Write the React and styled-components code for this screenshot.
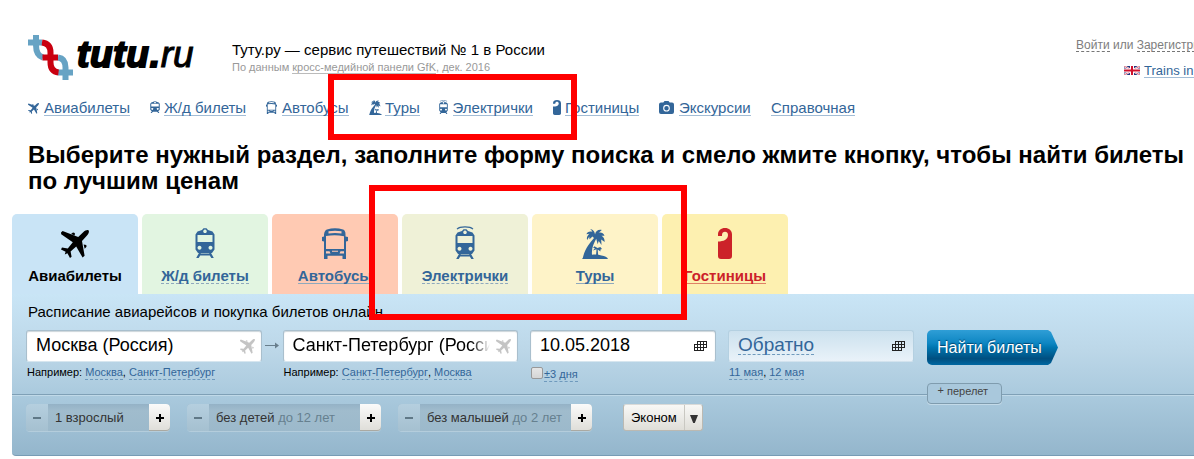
import React from "react";
import styled, { createGlobalStyle, css } from "styled-components";

const Global = createGlobalStyle`
  * { box-sizing: border-box; }
  html, body { margin: 0; padding: 0; background: #fff; overflow: hidden; }
  body { font-family: "Liberation Sans", Arial, sans-serif; color: #000; }
  svg { flex: none; }
`;

const Page = styled.div`
  position: relative;
  width: 1194px;
  height: 459px;
  overflow: hidden;
`;

const Header = styled.header`
  display: flex;
  height: 97px;
  padding: 35px 0 0 28px;
`;

const Logo = styled.div`
  display: flex;
  width: 204px;
  flex: none;
`;

const Wordmark = styled.div`
  margin-left: 3px;
  font-size: 37px;
  line-height: 40px;
  font-style: italic;
  font-weight: 700;
  white-space: nowrap;
  letter-spacing: 0.7px;
  -webkit-text-stroke: 2px #000;
`;

const WordmarkLight = styled.span`
  font-weight: 400;
  letter-spacing: 0;
  -webkit-text-stroke: 1px #000;
`;

const Tagline = styled.div`
  flex: 1;
  padding-top: 6px;
  font-size: 15px;
  line-height: 18px;
`;

const Source = styled.div`
  font-size: 11px;
  line-height: 16px;
  color: #999;
`;

const SourceLink = styled.span`
  border-bottom: 1px solid #bbb;
`;

const Account = styled.div`
  width: 118px;
  flex: none;
  padding-top: 3px;
  font-size: 12px;
  line-height: 14px;
  color: #7d7d7d;
  white-space: nowrap;
`;

const AccountLink = styled.span`
  display: inline-block;
  height: 14px;
  border-bottom: 1px dashed #777;
`;

const Language = styled.div`
  display: flex;
  align-items: center;
  gap: 4px;
  margin: 11px 0 0 48px;
  font-size: 13px;
  line-height: 15px;
  color: #369;
`;

const LanguageLabel = styled.span`
  height: 15px;
  line-height: 16px;
  border-bottom: 1px solid #a3bdd6;
`;

const Nav = styled.nav`
  display: flex;
  padding-left: 28px;
  height: 45px;
`;

const NavItem = styled.div`
  display: flex;
  flex: none;
  width: ${(p) => p.$width}px;
  font-size: 15px;
  line-height: 17px;
  padding-top: 2px;
  white-space: nowrap;
  color: #369;
`;

const NavIcon = styled.span`
  display: flex;
  flex: none;
  align-items: flex-start;
  width: ${(p) => p.$width}px;
  padding-top: ${(p) => p.$top || 0}px;
  padding-left: ${(p) => p.$left || 0}px;
`;

const NavLabel = styled.span`
  height: 17px;
  border-bottom: 1px solid #a3bdd6;
`;

const Heading = styled.h1`
  margin: 0;
  height: 72px;
  padding-left: 28px;
  font-size: 24px;
  line-height: 26px;
`;

const Tabs = styled.div`
  display: flex;
  gap: 4px;
  padding-left: 12px;
`;

const Tab = styled.div`
  display: flex;
  flex-direction: column;
  align-items: center;
  width: 126px;
  height: 80px;
  border-radius: 5px 5px 0 0;
  background: ${(p) => p.$bg};
  color: ${(p) => p.$color || "#369"};
`;

const TabIcon = styled.div`
  display: flex;
  align-items: flex-end;
  height: ${(p) => p.$bottom}px;
`;

const TabLabel = styled.div`
  margin-top: ${(p) => 53 - p.$bottom}px;
  height: 17px;
  font-size: 15px;
  line-height: 17px;
  font-weight: 700;
  border-bottom: ${(p) => (p.$line ? `1px ${p.$line} ${p.$lineColor || "#8fa9bd"}` : "none")};
`;

const Panel = styled.section`
  margin-left: 12px;
  width: 1190px;
  height: 162px;
  background: linear-gradient(#c9e5f6, #bcd7e8 35%, #a8c8dc 66%, #94b6cc);
  border-bottom: 1px solid #789cb5;
  border-radius: 0 0 0 4px;
`;

const SearchPart = styled.div`
  height: 102px;
  border-bottom: 1px solid #c0d9e8;
  box-shadow: inset 0 -1px 0 #7fa0b6;
`;

const PanelTitle = styled.div`
  height: 36px;
  padding: 9px 0 0 16px;
  font-size: 15px;
  line-height: 18px;
`;

const Fields = styled.div`
  display: flex;
  padding-left: 14px;
`;

const Field = styled.div`
  width: ${(p) => p.$width}px;
  margin-right: ${(p) => p.$gap || 0}px;
  flex: none;
`;

const Arrow = styled.div`
  width: 21px;
  padding: 12px 0 0 3px;
  flex: none;
  line-height: 0;
`;

const Input = styled.div`
  display: flex;
  align-items: center;
  justify-content: space-between;
  height: 32px;
  padding: 0 ${(p) => p.$right || 6}px 2px ${(p) => p.$left || 9}px;
  border: 1px solid #a9bfcd;
  border-bottom-color: #d7e6ef;
  border-radius: 3px;
  background: #fff;
  box-shadow: inset 0 1px 1px #ccd5da;
  font-size: 18px;
  white-space: nowrap;

  svg { margin-top: 2px; }

  ${(p) =>
    p.$pale &&
    css`
      border-color: #b4d0e1;
      border-bottom-color: #d3e3ee;
      background: linear-gradient(#cce1ee, #e9f2f9);
      box-shadow: none;
      color: #369;
      font-size: 19px;
    `}
`;

const FadingValue = styled.span`
  width: 197px;
  overflow: hidden;
  mask-image: linear-gradient(90deg, #000 178px, transparent 197px);
`;

const Dashed = styled.span`
  padding-bottom: 1px;
  border-bottom: 1px dashed #6f9abd;
  color: #369;
`;

const DashedValue = styled.span`
  height: 19px;
  line-height: 18px;
  border-bottom: 1px dashed #6f9abd;
`;

const Hint = styled.div`
  display: flex;
  align-items: flex-start;
  padding: ${(p) => (p.$check ? "5px 0 0 1px" : p.$flush ? "4px 0 0 0.5px" : "4px 0 0 1px")};
  font-size: 11px;
  line-height: 12px;
  white-space: pre;
`;

const Checkbox = styled.span`
  width: 12px;
  height: 12px;
  margin-right: 1px;
  border: 1px solid #999;
  border-radius: 2px;
  background: linear-gradient(#e6e6e6, #d5d5d5);
`;

const CheckLabel = styled(Dashed)`
  padding-top: 1px;
`;

const Actions = styled.div`
  width: 132px;
`;

const Submit = styled.div`
  width: 131px;
  height: 35px;
  padding-left: 10px;
  font-size: 16px;
  line-height: 35px;
  color: #fff;
  text-shadow: 0 -1px 1px #00436e;
  background: linear-gradient(#2f9ed6, #0d86c2 38%, #0076b0 50%, #004f80 82%, #0068a2);
  border-radius: 5px 0 0 5px;
  clip-path: polygon(0 0, 121px 0, 124px 2px, 131px 17.5px, 124px 33px, 121px 100%, 0 100%);
`;

const AddFlight = styled.div`
  display: flex;
  gap: 3px;
  width: 75px;
  height: 21px;
  margin-top: 18px;
  padding-left: 9.5px;
  border: 1px solid #7f9cae;
  border-radius: 4px;
  background: #a9c8dc;
  box-shadow: 0 1px 0 #c3dae8;
  font-size: 11px;
  line-height: 15px;
  color: #444;
`;

const Plus = styled.span`
  line-height: 13px;
`;

const Options = styled.div`
  display: flex;
  padding: 8px 0 0 14px;
`;

const Stepper = styled.div`
  display: flex;
  width: ${(p) => p.$width}px;
  height: 27px;
  margin-right: ${(p) => p.$gap}px;
  border-radius: 4px;
  background: linear-gradient(#94b2c6, #a0bccd 25%, #9cb9cb);
  box-shadow: 0 1px 0 #b4cddc;
  font-size: 13px;
  line-height: 27px;
  color: #333;
`;

const StepButton = styled.div`
  display: flex;
  align-items: center;
  justify-content: center;
  width: ${(p) => (p.$off ? 22 : 21)}px;
  flex: none;
  background: ${(p) => (p.$off ? "linear-gradient(#b5cfdf, #a5c0d0)" : "linear-gradient(#fbfbfa, #deddd8)")};
  border-radius: ${(p) => (p.$off ? "4px 0 0 4px" : "0 4px 4px 0")};
  box-shadow: ${(p) => (p.$off ? "none" : "inset 0 -1px 0 #aaa9a2")};
`;

const StepValue = styled.div`
  flex: 1;
  padding-left: 7px;
  white-space: pre;
`;

const Muted = styled.span`
  color: #66808f;
`;

const Select = styled.div`
  display: flex;
  width: 80px;
  height: 27px;
  border: 1px solid #bbb9b2;
  border-top-color: #d9dad8;
  border-radius: 3px;
  background: linear-gradient(#f8f8f6, #dfded8);
  font-size: 13px;
  line-height: 26px;
`;

const SelectLabel = styled.div`
  width: 61px;
  padding-left: 7px;
  border-right: 1px solid #c9c8c2;
`;

const SelectArrow = styled.div`
  display: flex;
  align-items: center;
  justify-content: center;
  flex: 1;
  padding-top: 2px;
`;

const Highlight = styled.div`
  position: absolute;
  left: ${(p) => p.$x}px;
  top: ${(p) => p.$y}px;
  width: ${(p) => p.$w}px;
  height: ${(p) => p.$h}px;
  border: 6px solid #f00;
`;

const Plane = ({ size = 28, fill = "currentColor" }) => (
  <svg width={size} height={size} viewBox="0 0 28 28" fill={fill}>
    <path d="M27.6.4C28.4 1.5 27.7 3.8 26 5.6L21 11l2.6 14.8-2 1.8L15.2 16.4 9.6 21.4l1 5.4L9 28l-2.6-4.8-2.6 1.4.8-2.9L0 19.4l1-1.8 5.8.8 5-6.2L.2 4.2 0 2.400 1.600 1l15.600 6 5-4.800C24 .4 26.800-.5 27.600.4Z" />
    <path d="m10 4 2-1.500 1.800.5v2.400ZM22.600 14.600l2.700.4.2 1.700-1.800 2.100Z" />
  </svg>
);

const Train = ({ width = 20, height = 30, wire }) => (
  <svg width={width} height={height} viewBox={wire ? "0 -3 20 33" : "0 0 20 30"} preserveAspectRatio="none" fill="currentColor">
    {wire && <path d="M2 .2C5-2.800 15-2.800 18 .2" fill="none" stroke="currentColor" strokeWidth="1.200" />}
    <path
      fillRule="evenodd"
      d="M7 2 8.500.3h3L13 2l4.500 1.600 2 3v15L17 25H3L.5 21.600V6.600l2-3ZM10 1.500a1.800 1.800 0 1 0 .01 0ZM2.500 7v7h15V7ZM4.500 17.800a2 2 0 1 0 .01 0ZM15.500 17.800a2 2 0 1 0 .01 0Z"
    />
    <path d="M4.500 24 1.200 30h2.500l1.500-2.600h9.600L16.300 30h2.500l-3.300-6-1.500 1.500H6Z" />
  </svg>
);

const Bus = ({ width = 26, height = 31 }) => (
  <svg width={width} height={height} viewBox="0 0 26 31" preserveAspectRatio="none" fill="currentColor">
    <path
      fillRule="evenodd"
      d="M5 1.500Q13-.9 21 1.500q2.500.8 2.500 5V8.500L26 9v4l-2 .6V31h-3.500v-3.200h-15V31H2V13.600L0 13V9l2-.5v-2q.5-4.200 3-5ZM6.500 3.300v2.200q6.500-1 13 0V3.300Q13 2 6.500 3.300ZM4 8v13h18V8.200Q13 6.300 4 8ZM4 23.200v2.300h4.500L7.500 23.200ZM22 23.200h-3.500l-1 2.300H22ZM10 22.800v1h6v-1Z"
    />
  </svg>
);

const Palm = ({ width = 26, height = 30 }) => (
  <svg width={width} height={height} viewBox="0 0 26 30" preserveAspectRatio="none" fill="currentColor">
    <path d="M13 5.500C13 2.500 10.500.2 8 0c1.500 1 2 2 2.300 2.700C7.500 1.800 5 3 4.400 5.200l3-.5C5.500 6.500 4.200 8.500 5.200 11l2-3.300.3 2.600L10.500 7.500 12 9C8 14 3 19 .8 29L0 30h26c-.6-2-3.200-3-6.500-3.600-3-.8-6-1.400-9.500-.6C9.300 19 12 14 14.200 9.800l1.500 5.400 1-3.300L19.500 16l-.3-5.500L22.700 13c0-3-1.300-5.200-3.200-6.200l3-.1C21.500 4 18.500 3 16.500 4l3.300-3C16.500.2 13.500 2 13 5.500Z" />
    <path d="m15.500 19-3-1.700-1.500 1.600 2 .2-2 2.400 3.500-1.300L14 27h2.200l-.5-6.400 2.700 2 .1-2.200 1.500-.3-1.700-2Z" />
  </svg>
);

const Hanger = ({ width = 14, height = 31 }) => (
  <svg width={width} height={height} viewBox="0 0 14 31" preserveAspectRatio="none" fill="currentColor">
    <path d="M0 8V6.500C0 2.500 3 0 7 0s7 2.500 7 6.500V28q0 3-3 3H3q-3 0-3-3V13.500c5.500 0 10-2 10-6.500 0-2.300-1.300-3.300-3-3.300S4 4.800 4 7v1Z" />
  </svg>
);

const Camera = () => (
  <svg width="15" height="13" viewBox="0 0 15 13" fill="currentColor">
    <path d="M4.300 1.500 5.500 0h4l1.200 1.500H13q2 0 2 2V11q0 2-2 2H2q-2 0-2-2V3.500q0-2 2-2Z" />
    <circle cx="7.500" cy="7.200" r="2.800" fill="none" stroke="#fff" strokeWidth="1.100" />
  </svg>
);

const Calendar = () => (
  <svg width="13" height="10" viewBox="0 0 13 10" shapeRendering="crispEdges" fill="#222">
    <path d="M3 0h10v1H3ZM0 3h13v1H0ZM0 6h13v1H0ZM0 9h10v1H0ZM0 3h1v7H0ZM3 0h1v10H3ZM6 0h1v10H6ZM9 0h1v10H9ZM12 0h1v7h-1Z" />
  </svg>
);

const LogoMark = () => (
  <svg width="46" height="46" viewBox="0 0 46 46" fill="none" strokeWidth="6">
    <path d="M8 0v10q0 10.500 7 12.500M30 22.500q7.500 1 7.500 10V45" stroke="#67a3c4" />
    <path d="M0 7.500h14M30 37.500h15" stroke="#67a3c4" />
    <path d="M14 7.500q8.500 1 8.500 10v10q0 9 8 10M14.500 22.500H30" stroke="#c90010" />
  </svg>
);

const Flag = () => (
  <svg width="16" height="9" viewBox="0 0 16 9">
    <path fill="#26347b" d="M0 0h16v9H0Z" />
    <path d="m0 0 16 9M16 0 0 9" stroke="#fff" strokeWidth="2" />
    <path d="m0 0 16 9M16 0 0 9" stroke="#d02040" strokeWidth=".7" />
    <path d="M8 0v9M0 4.500h16" stroke="#fff" strokeWidth="4" />
    <path d="M8 0v9M0 4.500h16" stroke="#d0102c" strokeWidth="2" />
  </svg>
);

const navItems = [
  { label: "Авиабилеты", width: 121, iconWidth: 16, top: 4, icon: <Plane size={11} /> },
  { label: "Ж/д билеты", width: 117, iconWidth: 15, top: 2, left: 0.5, icon: <Train width={10} height={12} /> },
  { label: "Автобусы", width: 103, iconWidth: 16, top: 2, icon: <Bus width={11} height={13} /> },
  { label: "Туры", width: 69, iconWidth: 16, top: 1, icon: <Palm width={13} height={15} /> },
  { label: "Электрички", width: 114, iconWidth: 14.5, top: 1, left: 0.7, icon: <Train width={9} height={14} wire /> },
  { label: "Гостиницы", width: 107, iconWidth: 13, top: 1, left: 0.5, icon: <Hanger width={8} height={15} /> },
  { label: "Экскурсии", width: 112, iconWidth: 20, top: 2, icon: <Camera /> },
  { label: "Справочная", width: 90, iconWidth: 0, icon: null },
];

const tabs = [
  { label: "Авиабилеты", bg: "#c9e4f6", color: "#000", bottom: 44, icon: <Plane /> },
  { label: "Ж/д билеты", bg: "#e2f5e1", line: "dashed", bottom: 44, icon: <Train /> },
  { label: "Автобусы", bg: "#ffcab3", line: "solid", bottom: 45, icon: <Bus /> },
  { label: "Электрички", bg: "#eff1d7", line: "dashed", bottom: 45, icon: <Train height={33} wire /> },
  { label: "Туры", bg: "#fef3c8", line: "solid", bottom: 45, icon: <Palm /> },
  { label: "Гостиницы", bg: "#fdf0b0", color: "#cc2229", line: "solid", lineColor: "#df8065", bottom: 45, icon: <Hanger /> },
];

const Counter = ({ width, gap, label, note }) => (
  <Stepper $width={width} $gap={gap}>
    <StepButton $off>
      <svg width="8" height="2"><path d="M0 0h8v2H0Z" fill="#5f7887" /></svg>
    </StepButton>
    <StepValue>
      {label}
      {note && <Muted> {note}</Muted>}
    </StepValue>
    <StepButton>
      <svg width="8" height="8"><path d="M3 0h2v3h3v2H5v3H3V5H0V3h3Z" /></svg>
    </StepButton>
  </Stepper>
);

export default function App() {
  return (
    <Page>
      <Global />
      <Header>
        <Logo>
          <LogoMark />
          <Wordmark>tutu.<WordmarkLight>ru</WordmarkLight></Wordmark>
        </Logo>
        <Tagline>
          Туту.ру — сервис путешествий № 1 в России
          <Source>По данным <SourceLink>кросс-медийной панели GfK</SourceLink>, дек. 2016</Source>
        </Tagline>
        <Account>
          <AccountLink>Войти</AccountLink> или <AccountLink>Зарегистрироваться</AccountLink>
          <Language><Flag /><LanguageLabel>Trains in Russia</LanguageLabel></Language>
        </Account>
      </Header>
      <Nav>
        {navItems.map((n) => (
          <NavItem key={n.label} $width={n.width}>
            <NavIcon $width={n.iconWidth} $top={n.top} $left={n.left}>{n.icon}</NavIcon>
            <NavLabel>{n.label}</NavLabel>
          </NavItem>
        ))}
      </Nav>
      <Heading>
        Выберите нужный раздел, заполните форму поиска и смело жмите кнопку, чтобы найти билеты по лучшим ценам
      </Heading>
      <Tabs>
        {tabs.map((t) => (
          <Tab key={t.label} $bg={t.bg} $color={t.color}>
            <TabIcon $bottom={t.bottom}>{t.icon}</TabIcon>
            <TabLabel $bottom={t.bottom} $line={t.line} $lineColor={t.lineColor}>{t.label}</TabLabel>
          </Tab>
        ))}
      </Tabs>
      <Panel>
        <SearchPart>
          <PanelTitle>Расписание авиарейсов и покупка билетов онлайн</PanelTitle>
          <Fields>
            <Field $width={236}>
              <Input>Москва (Россия)<Plane size={15} fill="#c4c4c4" /></Input>
              <Hint>Например: <Dashed>Москва</Dashed>, <Dashed>Санкт-Петербург</Dashed></Hint>
            </Field>
            <Arrow>
              <svg width="14" height="7"><path d="M0 3h10V.5L14 3.500 10 6.500V4H0Z" fill="#687e8c" /></svg>
            </Arrow>
            <Field $width={235} $gap={12}>
              <Input $left={8.5}><FadingValue>Санкт-Петербург (Россия)</FadingValue><Plane size={15} fill="#c4c4c4" /></Input>
              <Hint $flush>Например: <Dashed>Санкт-Петербург</Dashed>, <Dashed>Москва</Dashed></Hint>
            </Field>
            <Field $width={186} $gap={12}>
              <Input $right={8}>10.05.2018<Calendar /></Input>
              <Hint $check><Checkbox /><CheckLabel>±3 дня</CheckLabel></Hint>
            </Field>
            <Field $width={186} $gap={13}>
              <Input $pale $right={8}><DashedValue>Обратно</DashedValue><Calendar /></Input>
              <Hint><Dashed>11 мая</Dashed>, <Dashed>12 мая</Dashed></Hint>
            </Field>
            <Actions>
              <Submit>Найти билеты</Submit>
              <AddFlight><Plus>+</Plus>перелет</AddFlight>
            </Actions>
          </Fields>
        </SearchPart>
        <Options>
          <Counter width={144} gap={17} label="1 взрослый" />
          <Counter width={194} gap={17} label="без детей" note="до 12 лет" />
          <Counter width={194} gap={31} label="без малышей" note="до 2 лет" />
          <Select>
            <SelectLabel>Эконом</SelectLabel>
            <SelectArrow><svg width="8" height="8"><path d="M0 0h8L4.800 8H3.200Z" fill="#333" /></svg></SelectArrow>
          </Select>
        </Options>
      </Panel>
      <Highlight $x={328} $y={74} $w={249} $h={66} />
      <Highlight $x={369} $y={185} $w={318} $h={135} />
    </Page>
  );
}
